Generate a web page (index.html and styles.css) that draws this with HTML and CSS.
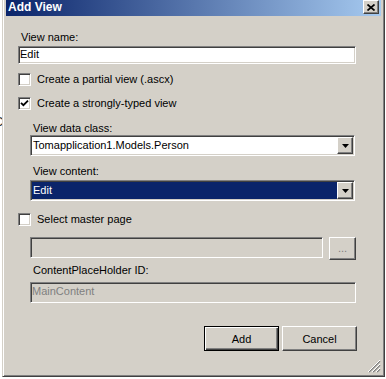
FILE: index.html
```html
<!DOCTYPE html>
<html lang="en">
<head>
    <meta charset="UTF-8">
    <title>Add View</title>
<link rel="stylesheet" href="styles.css">
</head>
<body>
    <div class="page">
        <div class="behind"><span class="behind-text">C</span></div>

        <div class="dialog">
            <div class="titlebar">
                <span class="title">Add View</span>
                <div class="close raised">
                    <svg width="8" height="7" viewBox="0 0 8 7"><path d="M0.5 0.5 L7.5 6.5 M7.5 0.5 L0.5 6.5" stroke="#000" stroke-width="1.7"/></svg>
                </div>
            </div>

            <div class="dialog-body">
                <div class="label">View name:</div>
                <div class="field field-name sunken">Edit</div>

                <div class="check row-partial">
                    <span class="box sunken"></span>
                    <span>Create a partial view (.ascx)</span>
                </div>
                <div class="check row-typed">
                    <span class="box sunken">
                        <svg width="9" height="9" viewBox="0 0 9 9"><path d="M1 3.8 L3.4 6.2 L8 1.6" fill="none" stroke="#000" stroke-width="1.8"/></svg>
                    </span>
                    <span>Create a strongly-typed view</span>
                </div>

                <div class="indent">
                    <div class="label label-class">View data class:</div>
                    <div class="combo sunken">
                        <span class="combo-text">Tomapplication1.Models.Person</span>
                        <span class="drop raised">
                            <svg width="7" height="4" viewBox="0 0 7 4"><polygon points="0,0 7,0 3.5,4" fill="#000"/></svg>
                        </span>
                    </div>
                    <div class="label label-content">View content:</div>
                    <div class="combo combo-content sunken">
                        <span class="combo-text selected">Edit</span>
                        <span class="drop raised">
                            <svg width="7" height="4" viewBox="0 0 7 4"><polygon points="0,0 7,0 3.5,4" fill="#000"/></svg>
                        </span>
                    </div>
                </div>

                <div class="check row-master">
                    <span class="box sunken"></span>
                    <span>Select master page</span>
                </div>

                <div class="indent">
                    <div class="master-row">
                        <div class="field field-master sunken disabled"></div>
                        <div class="btn btn-browse raised">...</div>
                    </div>
                    <div class="label label-holder">ContentPlaceHolder ID:</div>
                    <div class="field field-holder sunken disabled">MainContent</div>
                </div>

                <div class="actions">
                    <div class="btn btn-default">Add</div>
                    <div class="btn raised">Cancel</div>
                </div>
            </div>

            <span class="grip">
                <svg width="13" height="13" viewBox="0 0 13 13">
                    <path d="M12 1 L1 12 M12 5 L5 12 M12 9 L9 12" stroke="#808080" stroke-width="1.5"/>
                    <path d="M12 0 L0 12 M12 4 L4 12 M12 8 L8 12" stroke="#fff" stroke-width="1"/>
                </svg>
            </span>
        </div>
    </div>
</body>
</html>
```

FILE: styles.css
```css
*{
    padding:0;
    margin:0;
    box-sizing:border-box;
}
body{
    background:#fff;
    font-family:"Liberation Sans", Arial, sans-serif;
    font-size:11px;
    color:#000;
}
.page{
    display:flex;
    height:379px;
    overflow:hidden;
}
.behind{
    width:2px;
    overflow:hidden;
    padding-top:114px;
}
.behind-text{
    display:block;
    margin-left:-6px;
    font-size:13px;
    color:#333;
}

/* window frame */
.dialog{
    position:relative;
    width:383px;
    height:377px;
    background:#d4d0c8;
    border:1px solid;
    border-top:none;
    border-color:#d4d0c8 #404040 #404040 #d4d0c8;
    box-shadow:inset 1px 0 #fff, inset -1px -1px #808080;
    padding:0 3px 3px 3px;
}
.titlebar{
    height:16px;
    display:flex;
    justify-content:space-between;
    align-items:flex-start;
    background:linear-gradient(to right,#0a246a,#a6caf0);
    padding:0 2px 0 2px;
}
.title{
    color:#fff;
    font-weight:bold;
    font-size:12px;
    line-height:14px;
}
.close{
    width:16px;
    height:14px;
    display:flex;
    align-items:center;
    justify-content:center;
}
.close svg{
    display:block;
}

/* 3d borders */
.sunken{
    border:1px solid;
    border-color:#808080 #fff #fff #808080;
    box-shadow:inset 1px 1px #404040, inset -1px -1px #d4d0c8;
}
.raised{
    background:#d4d0c8;
    border:1px solid;
    border-color:#fff #404040 #404040 #fff;
    box-shadow:inset -1px -1px #808080, inset 1px 1px #d4d0c8;
}

.dialog-body{
    padding-left:12px;
    display:flex;
    flex-direction:column;
    align-items:flex-start;
}
.label{
    line-height:13px;
    height:13px;
    padding-left:3px;
    margin-top:15px;
}
.field{
    background:#fff;
    padding-left:1px;
    white-space:nowrap;
    overflow:hidden;
}
.field-name{
    width:338px;
    height:18px;
    line-height:14px;
    margin-top:2px;
}
.field.disabled{
    background:#d4d0c8;
    color:#808080;
    height:21px;
    line-height:17px;
}

.check{
    display:flex;
    align-items:center;
    height:13px;
    line-height:13px;
}
.check .box{
    width:13px;
    height:13px;
    background:#fff;
    margin-right:6px;
    display:flex;
    align-items:center;
    justify-content:center;
}
.check .box svg{
    display:block;
}
.row-partial{
    margin-top:9px;
}
.row-typed{
    margin-top:11px;
}
.row-master{
    margin-top:12px;
}

.indent{
    margin-left:12px;
    display:flex;
    flex-direction:column;
    align-items:flex-start;
}
.label-class{
    margin-top:12px;
}
.label-content{
    margin-top:9px;
}
.label-holder{
    margin-top:4px;
}

.combo{
    width:325px;
    height:21px;
    background:#fff;
    display:flex;
    padding:1px;
    margin-top:0;
}
.combo-content{
    margin-top:2px;
}
.combo-text{
    flex:1;
    line-height:17px;
    padding-left:1px;
    white-space:nowrap;
}
.combo-text.selected{
    background:#0a246a;
    color:#fff;
}
.drop{
    width:16px;
    height:17px;
    display:flex;
    align-items:center;
    justify-content:center;
}
.drop svg{
    display:block;
}

.master-row{
    margin-top:11px;
    display:flex;
    align-items:flex-start;
    gap:6px;
}
.field-master{
    width:293px;
}
.field-holder{
    width:326px;
    margin-top:5px;
}

.btn{
    width:75px;
    height:25px;
    display:flex;
    align-items:center;
    justify-content:center;
}
.btn-browse{
    width:27px;
    height:23px;
    color:#808080;
    padding-bottom:2px;
}
.btn-default{
    background:#d4d0c8;
    border:1px solid #000;
    box-shadow:inset 1px 1px #fff, inset -1px -1px #404040, inset -2px -2px #808080;
}
.actions{
    align-self:stretch;
    display:flex;
    justify-content:flex-end;
    gap:3px;
    margin-top:23px;
    padding-right:24px;
}

.grip{
    position:absolute;
    right:3px;
    bottom:3px;
    width:13px;
    height:13px;
}
.grip svg{
    display:block;
}
```
